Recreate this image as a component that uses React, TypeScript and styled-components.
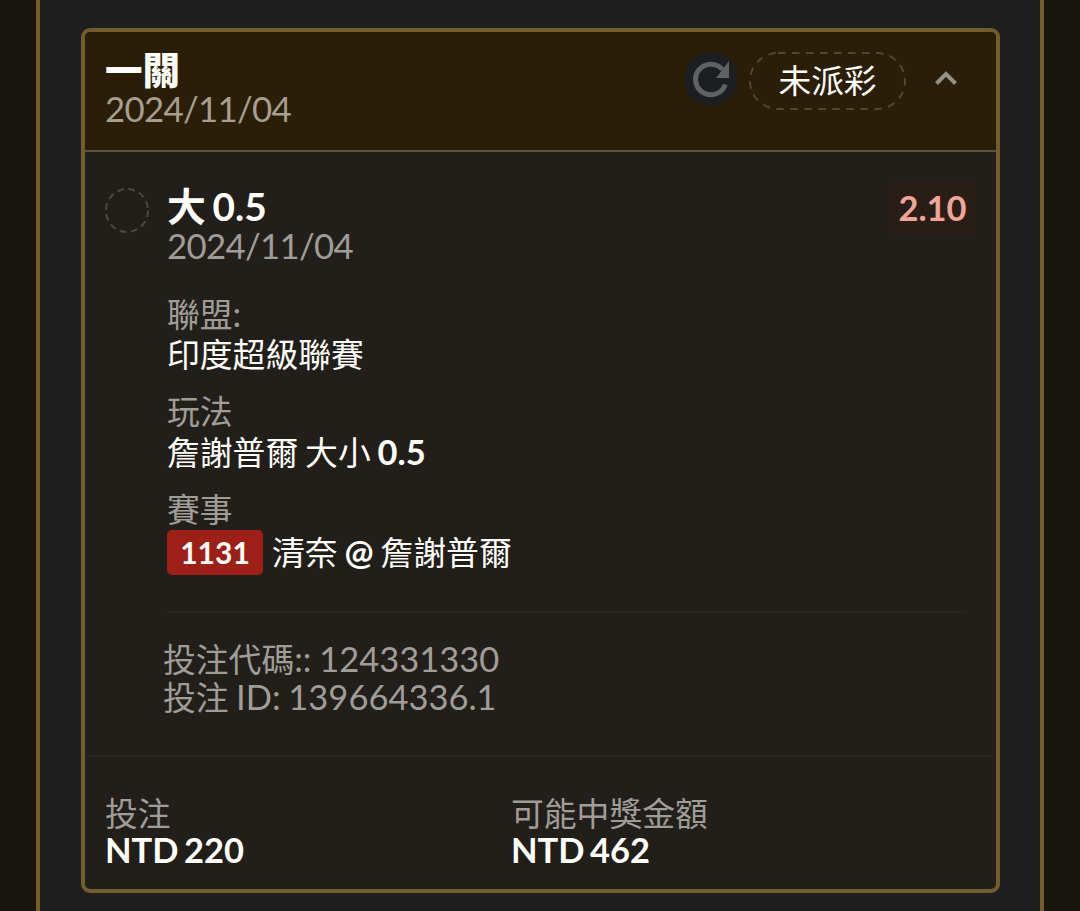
import React from 'react';
import styled, { createGlobalStyle } from 'styled-components';

const GlobalStyle = createGlobalStyle`
  * {
    box-sizing: border-box;
  }

  body {
    margin: 0;
    background-color: #19150f;
    font-family: Lato, 'Noto Sans CJK TC', sans-serif;
    color: #fffefa;
    overflow: hidden;
  }
`;

const App = () => {
  return (
    <Page lang="zh-TW">
      <GlobalStyle />
      <Panel>
        <Card>
          <Header>
            <div>
              <Title>一關</Title>
              <DateText $warm>2024/11/04</DateText>
            </div>
            <Actions>
              <RefreshButton aria-label="refresh">
                <svg width="54" height="54" viewBox="0 0 54 54">
                  <path d="M41.300 32.500A15.300 15.300 0 1 1 38.500 17.500" fill="none" stroke="#606163" strokeWidth="5" />
                  <path d="M45 9v17H32z" fill="#606163" />
                </svg>
              </RefreshButton>
              <Status>
                <StatusOutline viewBox="0 0 157 58">
                  <rect x="1" y="1" width="155" height="56" rx="28" />
                </StatusOutline>
                未派彩
              </Status>
              <ToggleButton aria-label="toggle">
                <svg width="22" height="16" viewBox="0 0 22 16">
                  <path d="M1.5 13.500 11 4l9.500 9.500" fill="none" stroke="#94908a" strokeWidth="4" />
                </svg>
              </ToggleButton>
            </Actions>
          </Header>

          <Selection>
            <Marker width="44" height="46" viewBox="0 0 44 46">
              <ellipse cx="22" cy="23.500" rx="21" ry="21.500" />
            </Marker>
            <Details>
              <SelectionTop>
                <div>
                  <Pick>大 0.5</Pick>
                  <DateText>2024/11/04</DateText>
                </div>
                <Odds>2.10</Odds>
              </SelectionTop>

              <Fields>
                <div>
                  <Label>
                    聯盟<Latin>:</Latin>
                  </Label>
                  <Value>印度超級聯賽</Value>
                </div>
                <div>
                  <Label>玩法</Label>
                  <Value>
                    詹謝普爾 大小 <Latin $bold>0.5</Latin>
                  </Value>
                </div>
                <div>
                  <Label>賽事</Label>
                  <Match>
                    <Badge>1131</Badge>
                    <Value>
                      清奈 <Latin $bold>@</Latin> 詹謝普爾
                    </Value>
                  </Match>
                </div>
              </Fields>

              <Codes>
                <div>
                  投注代碼<Latin>:: 124331330</Latin>
                </div>
                <div>
                  投注 <Latin>ID: 139664336.1</Latin>
                </div>
              </Codes>
            </Details>
          </Selection>

          <Footer>
            <div>
              <Label $tight>投注</Label>
              <Amount>NTD 220</Amount>
            </div>
            <div>
              <Label $tight>可能中獎金額</Label>
              <Amount>NTD 462</Amount>
            </div>
          </Footer>
        </Card>
      </Panel>
    </Page>
  );
};

const Page = styled.div`
  display: flex;
  justify-content: center;
  height: 911px;
`;

const Panel = styled.div`
  width: 1008px;
  padding: 28px 40px 0 41px;
  background-color: #1f1f20;
  border: solid #745d2c;
  border-width: 0 4px;
`;

const Card = styled.div`
  display: flex;
  flex-direction: column;
  height: 865px;
  background-color: #221f1a;
  border: 4px solid #745d2c;
  border-radius: 9px;
  overflow: hidden;
`;

const Header = styled.div`
  display: flex;
  justify-content: space-between;
  height: 120px;
  padding: 20px 39px 0 20px;
  background-color: #2a1f06;
  border-bottom: 2px solid #5e533e;
`;

const Title = styled.div`
  margin-top: -1px;
  font-size: 37.500px;
  font-weight: 900;
  line-height: 38px;
`;

const DateText = styled.div<{ $warm?: boolean }>`
  padding-top: ${({ $warm }) => ($warm ? '1px' : '2px')};
  font-size: 34.800px;
  line-height: 38px;
  letter-spacing: -0.700px;
  color: ${({ $warm }) => ($warm ? '#a69e90' : '#a09d98')};
`;

const Actions = styled.div`
  display: flex;
  align-items: flex-start;
`;

const RefreshButton = styled.div`
  width: 54px;
  height: 54px;
  margin-right: 11px;
  border-radius: 50%;
  background-color: #1c1e22;
`;

const Status = styled.div`
  position: relative;
  width: 157px;
  height: 58px;
  font-size: 32.700px;
  line-height: 58px;
  text-align: center;
`;

const StatusOutline = styled.svg`
  position: absolute;
  inset: 0;
  fill: none;
  stroke: #51462f;
  stroke-width: 2;
  stroke-dasharray: 7.500 6.500;
`;

const ToggleButton = styled.div`
  display: flex;
  margin: 18px 0 0 29px;
`;

const Selection = styled.div`
  display: flex;
  height: 605px;
  padding: 35px 31px 0 20px;
  border-bottom: 2px solid #26231f;
`;

const Marker = styled.svg`
  flex: none;
  margin-right: 18px;
  fill: none;
  stroke: #4b4842;
  stroke-width: 2;
  stroke-dasharray: 6.700 4.500;
`;

const Details = styled.div`
  flex: 1;
`;

const SelectionTop = styled.div`
  display: flex;
  justify-content: space-between;
  height: 107px;
`;

const Pick = styled.div`
  font-size: 38.800px;
  font-weight: 700;
  line-height: 38px;
  word-spacing: -2.800px;
`;

const Odds = styled.div`
  width: 86px;
  height: 58px;
  margin: -8px -10px 0 0;
  padding-left: 1px;
  border-radius: 6px;
  background-color: #291e17;
  color: #f0a596;
  font-size: 34.500px;
  font-weight: 700;
  line-height: 58px;
  text-align: center;
`;

const Fields = styled.div`
  display: flex;
  flex-direction: column;
  gap: 17px;
  height: 319px;
  border-bottom: 2px solid #26231f;
`;

const Label = styled.div<{ $tight?: boolean }>`
  font-size: 32.800px;
  line-height: ${({ $tight }) => ($tight ? '37px' : '40px')};
  color: #a09d98;
`;

const Value = styled.div`
  font-size: 32.800px;
  line-height: 40px;
  word-spacing: -1.500px;
`;

const Latin = styled.span<{ $bold?: boolean }>`
  font-size: 34.500px;
  font-weight: ${({ $bold }) => ($bold ? 700 : 400)};
`;

const Match = styled.div`
  display: flex;
  align-items: center;
  gap: 9px;
`;

const Badge = styled.div`
  width: 96px;
  height: 45px;
  border-radius: 5px;
  background-color: #9c2017;
  font-size: 30px;
  font-weight: 700;
  line-height: 45px;
  text-align: center;
`;

const Codes = styled.div`
  margin: 28px 0 0 -4px;
  font-size: 32.800px;
  line-height: 36.600px;
  word-spacing: -1px;
  color: #a09d98;
`;

const Footer = styled.div`
  display: grid;
  grid-template-columns: 406px 1fr;
  padding: 38px 20px 0;
`;

const Amount = styled.div`
  margin-top: -1px;
  font-size: 34.500px;
  font-weight: 700;
  line-height: 37px;
  word-spacing: -2.800px;
`;

export default App;
